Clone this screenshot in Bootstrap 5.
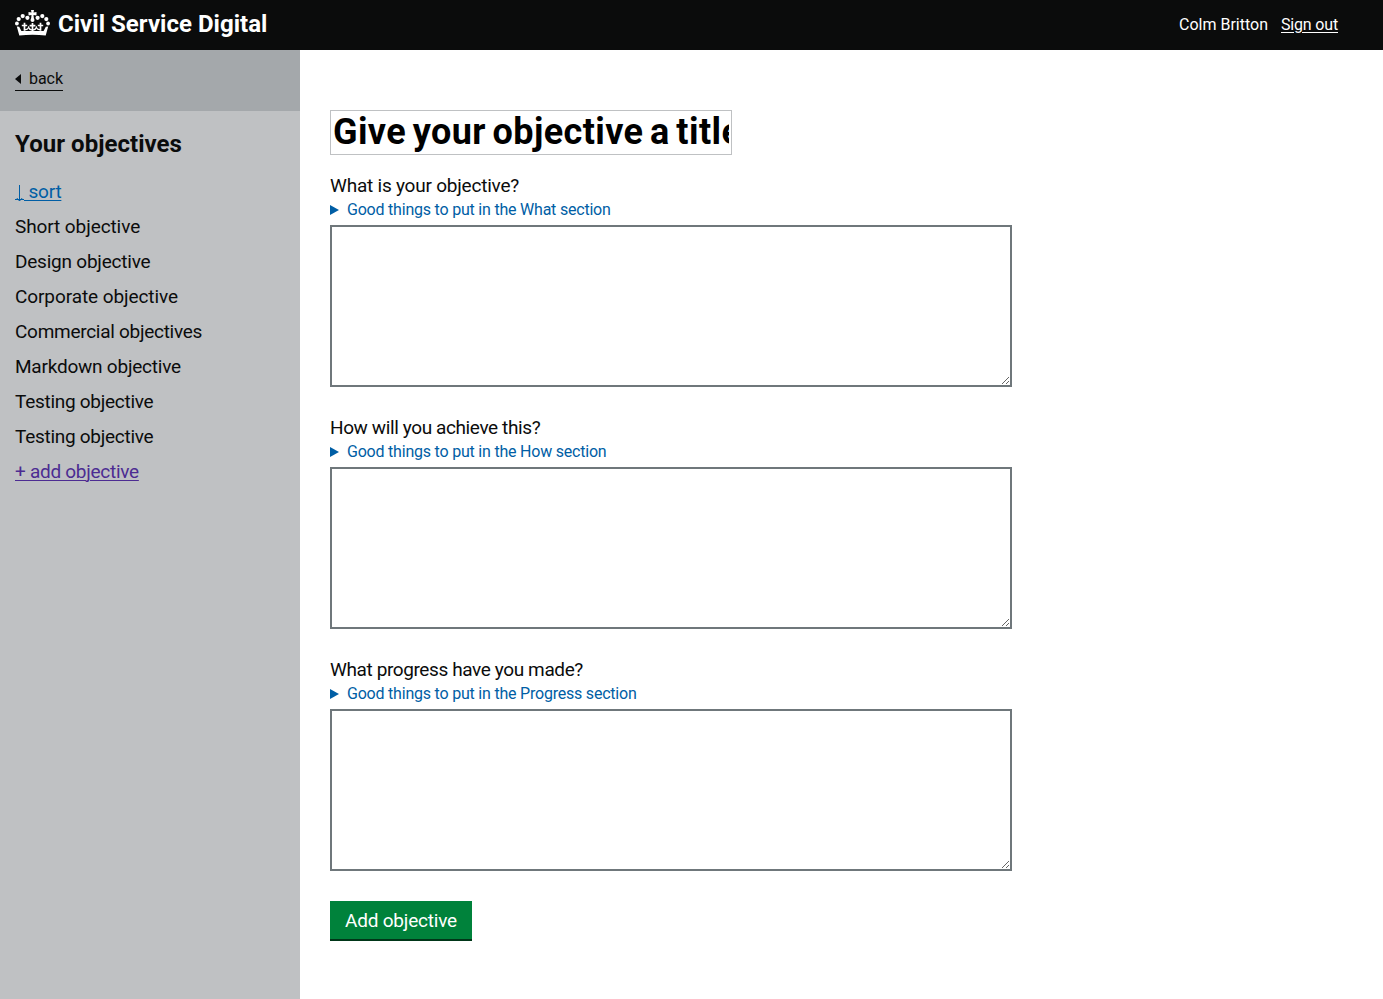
<!DOCTYPE html>
<html lang="en">
<head>
<meta charset="utf-8">
<meta name="viewport" content="width=device-width, initial-scale=1">
<title>Civil Service Digital</title>
<link href="https://cdn.jsdelivr.net/npm/bootstrap@5.3.0/dist/css/bootstrap.min.css" rel="stylesheet">
<style>
body { font-family: Roboto, "Liberation Sans", sans-serif; font-size: 19px; line-height: 25px; color: #0b0c0c; letter-spacing: -.22px; }
.site-header { height: 50px; background: #0b0c0c; padding: 0 45px 2px 15px; }
.crown { margin-top: -2px; }
.brand-name { font-size: 24px; font-weight: 700; line-height: 30px; letter-spacing: .03px; margin-left: 8px; }
.account { font-size: 16px; line-height: 20px; letter-spacing: 0; gap: 13px; padding-top: 1px; }
.account a { letter-spacing: -.17px; }
a { text-underline-offset: 2px; text-decoration-thickness: 1px; }
.side { width: 300px; background: #bfc1c3; }
.back-bar { height: 61px; background: #a4a8ab; padding: 17px 15px 0; }
.back-link { width: 48px; height: 24px; font-size: 16px; line-height: 23px; letter-spacing: -.04px; color: #0b0c0c; border-bottom: 1px solid #0b0c0c; gap: 8px; }
.side-nav { padding: 18px 15px; }
.side-nav h2 { font-size: 24px; font-weight: 700; line-height: 30px; letter-spacing: .04px; margin-bottom: 20px; }
.side-nav li { height: 35px; line-height: 25px; }
.side-nav .loose { letter-spacing: -.09px; }
.tight { letter-spacing: -.28px; }
.tighter { letter-spacing: -.39px; }
.sort { color: #005ea5; }
.sort svg { vertical-align: -4px; }
.visited { color: #4c2c92; }
.content { padding: 60px 30px 0; }
.title-input { width: 402px; height: 45px; padding: 0 2px 2px; margin-bottom: 18px; border: 1px solid #bfc1c3; font-size: 36px; font-weight: 700; letter-spacing: .4px; word-spacing: -2.7px; color: #000; }
.field { margin-bottom: 28px; }
.field label { height: 27px; }
.hint { height: 20px; font-size: 16px; line-height: 20px; letter-spacing: -.21px; color: #005ea5; gap: 8px; }
.answer { width: 682px; height: 162px; border: 2px solid #6f777b; padding: 4px; margin-top: 5px; resize: vertical; }
.add-btn { width: 142px; height: 40px; background: #00823b; color: #fff; border: 0; border-bottom: 2px solid #003618; padding: 0; margin-top: 30px; letter-spacing: -.2px; }
</style>
</head>
<body class="d-flex flex-column min-vh-100">
<header class="site-header d-flex align-items-center justify-content-between text-white">
  <div class="d-flex align-items-center">
    <svg class="crown" width="35" height="27" viewBox="0 0 35 27" fill="#fff" aria-hidden="true">
      <path d="M16 0h3l-.5 2.6 3-.5v3.3l-3-.5.5 5h-3l.5-5-3 .5V2.100l3 .5z"/>
      <circle cx="17.500" cy="10" r="2"/>
      <circle cx="12.400" cy="7.800" r="2.100"/><circle cx="22.600" cy="7.800" r="2.100"/>
      <circle cx="7.700" cy="6.100" r="2.100"/><circle cx="27.300" cy="6.100" r="2.100"/>
      <circle cx="3.700" cy="9.100" r="2.100"/><circle cx="31.300" cy="9.100" r="2.100"/>
      <circle cx="1.900" cy="13.500" r="1.900"/><circle cx="33.100" cy="13.500" r="1.900"/>
      <path d="M1.800 16.400 4.200 16.800 6.400 21H28.600L30.800 16.800 33.200 16.400 30.700 25.600Q17.500 23.800 4.300 25.600z"/>
      <g fill="none" stroke="#fff" stroke-width="1.700">
        <path d="M9.500 12.800v8M6.800 15.500h5.400M17.500 13v8M14.600 15.600h5.800M25.500 12.800v8M22.800 15.500h5.400"/>
        <path d="M9.500 19.500q3.800.7 4.200-3.200M25.500 19.500q-3.800.7-4.200-3.200M17.500 19.700q-3 .5-3.700-2.200M17.500 19.700q3 .5 3.700-2.200" stroke-width="1.200"/>
      </g>
    </svg>
    <span class="brand-name">Civil Service Digital</span>
  </div>
  <div class="account d-flex"><span>Colm Britton</span><a href="#" class="text-white">Sign out</a></div>
</header>
<div class="d-flex flex-grow-1">
  <aside class="side flex-shrink-0">
    <div class="back-bar">
      <a href="#" class="back-link d-flex align-items-center text-decoration-none">
        <svg width="6" height="10" viewBox="0 0 6 10" aria-hidden="true"><path d="M6 0v10L0 5z" fill="currentColor"/></svg>back
      </a>
    </div>
    <nav class="side-nav">
      <h2>Your objectives</h2>
      <ul class="list-unstyled mb-0">
        <li><a href="#" class="sort"><svg width="9" height="17" viewBox="0 0 9 17" aria-hidden="true"><path d="M4.500 0v16M1.800 13l2.700 3 2.700-3M0 14.500h9" fill="none" stroke="currentColor"/></svg><span> sort</span></a></li>
        <li class="loose">Short objective</li>
        <li>Design objective</li>
        <li class="loose">Corporate objective</li>
        <li class="tight">Commercial objectives</li>
        <li>Markdown objective</li>
        <li class="tight">Testing objective</li>
        <li class="tight">Testing objective</li>
        <li class="tight"><a href="#" class="visited">+ add objective</a></li>
      </ul>
    </nav>
  </aside>
  <main class="content flex-grow-1">
    <input class="title-input d-block rounded-0" value="Give your objective a title" aria-label="Objective title">
    <div class="field">
      <label for="what" class="d-block">What is your objective?</label>
      <div class="hint d-flex align-items-center"><svg width="9" height="10" viewBox="0 0 9 10" aria-hidden="true"><path d="M0 0v10l9-5z" fill="currentColor"/></svg>Good things to put in the What section</div>
      <textarea id="what" class="answer d-block"></textarea>
    </div>
    <div class="field">
      <label for="how" class="d-block tighter">How will you achieve this?</label>
      <div class="hint d-flex align-items-center"><svg width="9" height="10" viewBox="0 0 9 10" aria-hidden="true"><path d="M0 0v10l9-5z" fill="currentColor"/></svg>Good things to put in the How section</div>
      <textarea id="how" class="answer d-block"></textarea>
    </div>
    <div class="field">
      <label for="progress" class="d-block tighter">What progress have you made?</label>
      <div class="hint d-flex align-items-center"><svg width="9" height="10" viewBox="0 0 9 10" aria-hidden="true"><path d="M0 0v10l9-5z" fill="currentColor"/></svg>Good things to put in the Progress section</div>
      <textarea id="progress" class="answer d-block"></textarea>
    </div>
    <button class="add-btn d-block" type="button">Add objective</button>
  </main>
</div>
<script src="https://cdn.jsdelivr.net/npm/bootstrap@5.3.0/dist/js/bootstrap.bundle.min.js"></script>
</body>
</html>
